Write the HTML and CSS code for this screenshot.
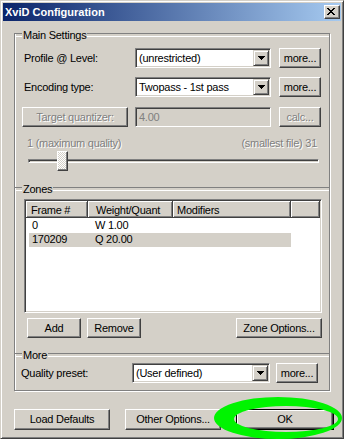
FILE: index.html
```html
<!DOCTYPE html>
<html>
<head>
<meta charset="utf-8">
<title>XviD Configuration</title>
<link rel="stylesheet" href="styles.css">
</head>
<body>
<div class="window">
  <div class="titlebar">
    <span class="title">XviD Configuration</span>
    <span class="close-btn">
      <svg width="8" height="7" viewBox="0 0 8 7" shape-rendering="crispEdges"><path fill="#000" d="M0 0h2v1H0zM6 0h2v1H6zM1 1h2v1H1zM5 1h2v1H5zM2 2h4v1H2zM3 3h2v1H3zM2 4h4v1H2zM1 5h2v1H1zM5 5h2v1H5zM0 6h2v1H0zM6 6h2v1H6z"/></svg>
    </span>
  </div>
  <div class="client">
    <div class="group">
      <div class="legend-row legend-main"><span class="legend">Main Settings</span></div>

      <div class="row row-main row-1">
        <span class="label">Profile @ Level:</span>
        <div class="combo"><span class="combo-value">(unrestricted)</span><span class="combo-drop"><svg width="7" height="4" viewBox="0 0 7 4" shape-rendering="crispEdges"><path fill="#000" d="M0 0h7v1H0zM1 1h5v1H1zM2 2h3v1H2zM3 3h1v1H3z"/></svg></span></div>
        <button class="btn btn-small">more...</button>
      </div>

      <div class="row row-main row-2">
        <span class="label">Encoding type:</span>
        <div class="combo"><span class="combo-value">Twopass - 1st pass</span><span class="combo-drop"><svg width="7" height="4" viewBox="0 0 7 4" shape-rendering="crispEdges"><path fill="#000" d="M0 0h7v1H0zM1 1h5v1H1zM2 2h3v1H2zM3 3h1v1H3z"/></svg></span></div>
        <button class="btn btn-small">more...</button>
      </div>

      <div class="row row-main row-3">
        <button class="btn btn-target" disabled>Target quantizer:</button>
        <div class="edit edit-disabled">4.00</div>
        <button class="btn btn-small" disabled>calc...</button>
      </div>

      <div class="range">
        <span>1 (maximum quality)</span>
        <span>(smallest file) 31</span>
      </div>
      <div class="slider">
        <div class="track"></div>
        <div class="thumb"></div>
      </div>

      <div class="legend-row legend-zones"><span class="legend">Zones</span></div>

      <div class="listview">
        <div class="lv-head">
          <div class="th th-frame">Frame #</div>
          <div class="th th-weight">Weight/Quant</div>
          <div class="th th-mod">Modifiers</div>
          <div class="th th-rest"></div>
        </div>
        <div class="lv-body">
          <div class="tr"><span class="td td-frame">0</span><span class="td td-weight">W 1.00</span></div>
          <div class="tr selected"><span class="td td-frame">170209</span><span class="td td-weight">Q 20.00</span></div>
        </div>
      </div>

      <div class="zone-buttons">
        <button class="btn btn-add">Add</button>
        <button class="btn btn-remove">Remove</button>
        <button class="btn btn-zone">Zone Options...</button>
      </div>

      <div class="legend-row legend-more"><span class="legend">More</span></div>

      <div class="row row-more">
        <span class="label label-more">Quality preset:</span>
        <div class="combo combo-more"><span class="combo-value">(User defined)</span><span class="combo-drop"><svg width="7" height="4" viewBox="0 0 7 4" shape-rendering="crispEdges"><path fill="#000" d="M0 0h7v1H0zM1 1h5v1H1zM2 2h3v1H2zM3 3h1v1H3z"/></svg></span></div>
        <button class="btn btn-small btn-more2">more...</button>
      </div>
    </div>

    <div class="footer">
      <button class="btn btn-foot">Load Defaults</button>
      <button class="btn btn-foot">Other Options...</button>
      <button class="btn btn-foot btn-ok btn-default">OK</button>
    </div>
  </div>

  <svg class="highlight" width="344" height="439" viewBox="0 0 344 439">
    <path fill="#00f400" fill-rule="evenodd" d="M214 418a64 21 0 1 0 128 0a64 21 0 1 0 -128 0Z M234 419a52 13 0 1 0 104 0a52 13 0 1 0 -104 0Z"/>
  </svg>
</div>
</body>
</html>
```

FILE: styles.css
```css
* { box-sizing: border-box; }
html, body { margin: 0; padding: 0; }
body {
  width: 344px;
  height: 439px;
  overflow: hidden;
  background: #d4d0c8;
  font-family: "Liberation Sans", Arial, sans-serif;
  font-size: 11px;
  line-height: 13px;
  color: #000;
  letter-spacing: -0.25px;
}

.window {
  position: relative;
  width: 344px;
  height: 439px;
  background: #d4d0c8;
  border: 1px solid;
  border-color: #d4d0c8 #404040 #404040 #d4d0c8;
  box-shadow: inset 1px 1px 0 #fff, inset -1px -1px 0 #808080;
  padding: 2px;
  display: flex;
  flex-direction: column;
}

.titlebar {
  height: 18px;
  flex: none;
  display: flex;
  align-items: flex-start;
  background: linear-gradient(to right, #0a246a, #a6caf0);
}
.title {
  color: #fff;
  font-weight: bold;
  margin: 3px 0 0 2px;
  letter-spacing: 0;
  white-space: nowrap;
}
.close-btn {
  margin: 2px 1px 0 auto;
  width: 16px;
  height: 14px;
  background: #d4d0c8;
  border: 1px solid;
  border-color: #fff #404040 #404040 #fff;
  box-shadow: inset -1px -1px 0 #808080;
  padding: 2px 0 0 2px;
  display: flex;
  align-items: flex-start;
}
.close-btn svg { display: block; }

.client {
  flex: 1;
  padding: 12px 0 0 11px;
  display: flex;
  flex-direction: column;
}

.group {
  width: 316px;
  height: 358px;
  flex: none;
  border: 1px solid #808080;
  border-top: 0;
  box-shadow: inset 1px 0 0 #fff, 1px 1px 0 #fff;
  display: flex;
  flex-direction: column;
}

.legend-row {
  display: flex;
  height: 13px;
  flex: none;
}
.legend-row::before,
.legend-row::after {
  content: "";
  height: 2px;
  margin-top: 4px;
  border-top: 1px solid #808080;
  border-bottom: 1px solid #fff;
}
.legend-row::before { width: 7px; }
.legend-row::after { flex: 1; }
.legend { padding: 0 1px; white-space: nowrap; }
.legend-main { margin-top: -4px; }
.legend-zones { margin-top: 12px; }
.legend-more { margin-top: 11px; }

.row {
  display: flex;
  align-items: center;
  height: 20px;
  flex: none;
}
.row-main { padding-left: 7px; }
.row-1 { margin-top: 6px; }
.row-2 { margin-top: 9px; }
.row-3 { margin-top: 10px; }
.label {
  width: 113px;
  padding-left: 2px;
  flex: none;
  white-space: nowrap;
}

.combo,
.edit {
  width: 136px;
  height: 20px;
  flex: none;
  display: flex;
  align-items: center;
  background: #fff;
  border: 1px solid;
  border-color: #808080 #fff #fff #808080;
  box-shadow: inset 1px 1px 0 #404040, inset -1px -1px 0 #d4d0c8;
  padding: 1px;
}
.combo-value {
  flex: 1;
  padding-left: 2px;
  white-space: nowrap;
}
.combo-drop {
  width: 16px;
  height: 16px;
  flex: none;
  background: #d4d0c8;
  border: 1px solid;
  border-color: #d4d0c8 #404040 #404040 #d4d0c8;
  box-shadow: inset 1px 1px 0 #fff, inset -1px -1px 0 #808080;
  display: flex;
  align-items: center;
  justify-content: center;
}
.combo-drop svg { display: block; }
.edit { padding-left: 3px; }
.edit-disabled {
  background: #d4d0c8;
  color: #808080;
}

.btn {
  font: inherit;
  letter-spacing: inherit;
  color: #000;
  background: #d4d0c8;
  padding: 0;
  margin: 0;
  height: 20px;
  border: 1px solid;
  border-color: #fff #404040 #404040 #fff;
  border-radius: 0;
  box-shadow: inset -1px -1px 0 #808080;
  display: flex;
  align-items: center;
  justify-content: center;
  flex: none;
  white-space: nowrap;
}
.btn:disabled {
  color: #808080;
  text-shadow: 1px 1px 0 #fff;
}
.btn-default {
  border-color: #000;
  box-shadow: inset 1px 1px 0 #fff, inset -1px -1px 0 #404040, inset -2px -2px 0 #808080;
}
.btn-small {
  width: 42px;
  margin-left: 8px;
}
.btn-target {
  width: 106px;
  margin-right: 7px;
}

.range {
  display: flex;
  justify-content: space-between;
  margin-top: 10px;
  padding: 0 12px;
  color: #808080;
  text-shadow: 1px 1px 0 #fff;
  flex: none;
}
.slider {
  position: relative;
  width: 291px;
  height: 20px;
  margin: 1px 0 0 13px;
  flex: none;
}
.track {
  margin-top: 8px;
  height: 4px;
  border: 1px solid;
  border-color: #808080 #fff #fff #808080;
  box-shadow: inset 1px 1px 0 #404040, inset -1px -1px 0 #d4d0c8;
}
.thumb {
  position: absolute;
  left: 29px;
  top: 0;
  width: 11px;
  height: 20px;
  border: 1px solid;
  border-color: #fff #404040 #404040 #fff;
  box-shadow: inset -1px -1px 0 #808080;
  background: repeating-conic-gradient(#fff 0 25%, #d4d0c8 0 50%) 0 0 / 2px 2px;
}

.listview {
  margin: 3px 0 0 9px;
  width: 298px;
  height: 114px;
  flex: none;
  background: #fff;
  border: 1px solid;
  border-color: #808080 #fff #fff #808080;
  box-shadow: inset 1px 1px 0 #404040, inset -1px -1px 0 #d4d0c8;
  padding: 1px;
}
.lv-head {
  display: flex;
  height: 17px;
}
.th {
  height: 17px;
  padding-top: 3px;
  background: #d4d0c8;
  border-right: 1px solid #404040;
  border-bottom: 1px solid #404040;
  box-shadow: inset 1px 1px 0 #fff, inset -1px -1px 0 #808080;
  white-space: nowrap;
  overflow: hidden;
  flex: none;
}
.th-frame { width: 62px; padding-left: 5px; }
.th-weight { width: 85px; padding-left: 8px; }
.th-mod { width: 118px; padding-left: 4px; }
.th-rest { flex: 1; }
.lv-body { padding-top: 1px; }
.tr {
  display: flex;
  height: 14px;
  width: 262px;
  margin-left: 3px;
}
.tr.selected { background: #d4d0c8; }
.td { white-space: nowrap; }
.td-frame { width: 59px; padding-left: 3px; }
.td-weight { padding-left: 7px; }

.zone-buttons {
  display: flex;
  height: 20px;
  margin-top: 5px;
  padding: 0 7px 0 12px;
  flex: none;
}
.btn-add,
.btn-remove { width: 54px; }
.btn-remove { margin-left: 6px; }
.btn-zone { width: 86px; margin-left: auto; }

.row-more {
  margin-top: 1px;
  padding-left: 6px;
}
.label-more { width: 111px; padding-left: 0; }
.combo-more { width: 138px; }
.btn-more2 { margin-left: 6px; }

.footer {
  display: flex;
  gap: 15px;
  margin-top: 18px;
}
.btn-foot { width: 96px; height: 21px; }
.btn-ok { width: 98px; }

.highlight {
  position: absolute;
  left: -1px;
  top: -1px;
  pointer-events: none;
}
```
